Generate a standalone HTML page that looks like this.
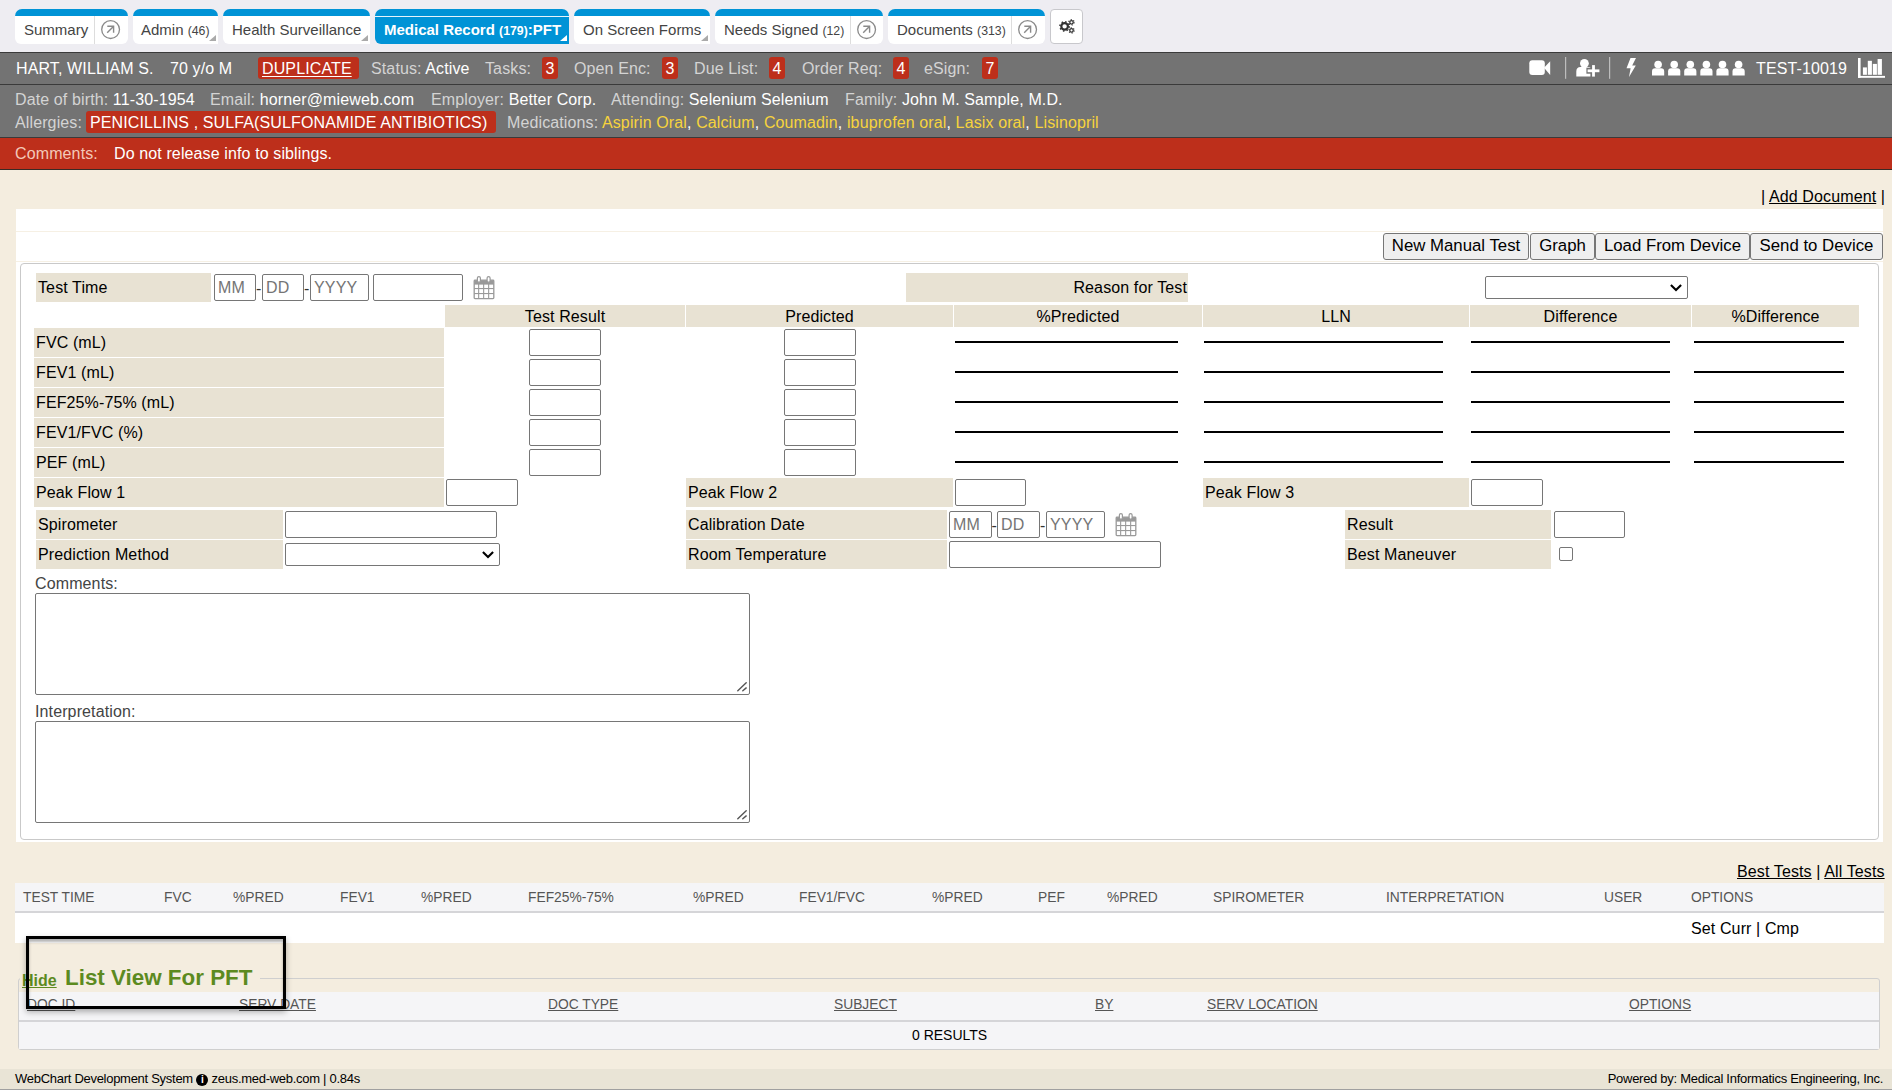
<!DOCTYPE html>
<html><head><meta charset="utf-8">
<style>
*{box-sizing:border-box}
html,body{margin:0;padding:0}
body{width:1892px;height:1090px;overflow:hidden;position:relative;background:#f4eddf;font-family:"Liberation Sans",sans-serif;font-size:16px;color:#000;letter-spacing:0.12px}
.a{position:absolute;white-space:nowrap}
#top{position:absolute;left:0;top:0;width:1892px;height:52px;background:#eeedf2}
.tab{position:absolute;top:9px;height:35px;letter-spacing:0;background:#fff;border-top:7px solid #0093d6;border-radius:7px 7px 6px 6px;font-size:15px;color:#444}
.tab .t{position:absolute;top:5px;white-space:nowrap}
.tab .cnt{font-size:12.3px}
.tab .div{position:absolute;top:0;width:1px;height:28px;background:#ddd}
.tab .ext{position:absolute;top:5px;width:18px;height:18px;border:1.5px solid #777;border-radius:50%}
.tab .tri{position:absolute;right:2px;bottom:3px;width:0;height:0;border-left:7px solid transparent;border-bottom:6px solid #aaa}
.tab.sq{border-bottom-right-radius:0}
.tab.act{background:#0093d6;color:#fff;font-weight:bold}
.tab.act .tri{border-bottom-color:#fff}
#bar1{position:absolute;left:0;top:52px;width:1892px;height:33px;background:#737373;border-top:1px solid #3a3a3a;border-bottom:1px solid #3a3a3a;color:#fff}
#bar2{position:absolute;left:0;top:85px;width:1892px;height:53px;background:#737373;border-bottom:1px solid #3a3a3a;color:#fff}
#bar3{position:absolute;left:0;top:138px;width:1892px;height:32px;background:#bd2f1b;border-bottom:1px solid #3a2a25;color:#fff}
.lbl{color:#d4d4d4}
.med{color:#f7d33c}
.badge{position:absolute;background:#bd2f1b;color:#fff;border-radius:3px;text-align:center}

#wb{position:absolute;left:16px;top:209px;width:1867px;height:633px;background:#fff}
.hl{position:absolute;left:16px;width:1867px;height:1px;background:#f6f0e4}
.btn{position:absolute;top:233px;height:27px;background:#efefef;border:1px solid #767676;border-radius:3px;font-size:16.8px;text-align:center;line-height:24px;letter-spacing:0}
#panel{position:absolute;left:20px;top:263px;width:1859px;height:577px;border:1px solid #c9c9c9;border-radius:4px;background:#fff}
.lb{position:absolute;background:#e8e2d3;height:29px}
.lb span{position:absolute;top:6px;left:2px;white-space:nowrap}
.hd{position:absolute;top:305px;height:22px;background:#e8e2d3;text-align:center;line-height:18px;padding-top:2.5px}
.in{position:absolute;height:27px;border:1px solid #767676;border-radius:2px;background:#fff}
.ph{color:#757575;font-size:16px;padding-left:3px;line-height:26px;letter-spacing:0.2px}
.ul{position:absolute;height:2px;background:#000}
.cal{position:absolute}
.ta{position:absolute;left:35px;width:715px;height:102px;border:1px solid #767676;border-radius:2px;background:#fff}
.tl{position:absolute;left:35px;color:#444;white-space:nowrap;margin-top:1px}
.lh{position:absolute;font-size:13.8px;color:#555;white-space:nowrap;letter-spacing:0}
.dh{position:absolute;font-size:13.8px;color:#555;white-space:nowrap;text-decoration:underline;letter-spacing:0}
</style></head><body>
<div id="top">
  <div class="tab" style="left:15px;width:113px"><span class="t" style="left:9px">Summary</span><span class="div" style="left:79px"></span><svg style="position:absolute;left:86px;top:4px" width="20" height="20" viewBox="0 0 20 20"><circle cx="9.6" cy="9.6" r="8.9" fill="none" stroke="#8a8a8a" stroke-width="1.3"/><path d="M6.2 12.8 L12.4 6.6 M6.3 6.3 H12.6 V12.8" fill="none" stroke="#8a8a8a" stroke-width="1.4"/></svg></div>
  <div class="tab sq" style="left:133px;width:85px"><span class="t" style="left:8px">Admin <span class="cnt">(46)</span></span><span class="tri"></span></div>
  <div class="tab sq" style="left:223px;width:147px"><span class="t" style="left:9px">Health Surveillance</span><span class="tri"></span></div>
  <div class="tab act sq" style="left:375px;width:194px"><span style="position:absolute;left:0;top:0;width:100%;height:1px;background:#e6f4fb"></span><span class="t" style="left:9px">Medical Record <span class="cnt">(179)</span>:PFT</span><span class="tri"></span></div>
  <div class="tab sq" style="left:574px;width:136px"><span class="t" style="left:9px">On Screen Forms</span><span class="tri"></span></div>
  <div class="tab" style="left:715px;width:168px"><span class="t" style="left:9px">Needs Signed <span class="cnt">(12)</span></span><span class="div" style="left:135px"></span><svg style="position:absolute;left:142px;top:4px" width="20" height="20" viewBox="0 0 20 20"><circle cx="9.6" cy="9.6" r="8.9" fill="none" stroke="#8a8a8a" stroke-width="1.3"/><path d="M6.2 12.8 L12.4 6.6 M6.3 6.3 H12.6 V12.8" fill="none" stroke="#8a8a8a" stroke-width="1.4"/></svg></div>
  <div class="tab" style="left:888px;width:157px"><span class="t" style="left:9px">Documents <span class="cnt">(313)</span></span><span class="div" style="left:123px"></span><svg style="position:absolute;left:130px;top:4px" width="20" height="20" viewBox="0 0 20 20"><circle cx="9.6" cy="9.6" r="8.9" fill="none" stroke="#8a8a8a" stroke-width="1.3"/><path d="M6.2 12.8 L12.4 6.6 M6.3 6.3 H12.6 V12.8" fill="none" stroke="#8a8a8a" stroke-width="1.4"/></svg></div>
  <div style="position:absolute;left:1050px;top:9px;width:33px;height:35px;background:#fff;border:1px solid #c8c8cc;border-radius:4px"><svg style="position:absolute;left:5.5px;top:5.5px" width="20" height="20" viewBox="0 0 20 20"><g transform="translate(0.8 0.8) scale(0.92)">
<circle cx="7.4" cy="10.4" r="3.6" fill="none" stroke="#333" stroke-width="2.4"/>
<circle cx="7.4" cy="10.4" r="5.1" fill="none" stroke="#333" stroke-width="1.6" stroke-dasharray="1.6 2.4"/>
<circle cx="14.9" cy="6" r="1.9" fill="none" stroke="#333" stroke-width="1.4"/>
<circle cx="14.9" cy="6" r="2.9" fill="none" stroke="#333" stroke-width="1.2" stroke-dasharray="1.2 1.9"/>
<circle cx="14.9" cy="14.8" r="1.9" fill="none" stroke="#333" stroke-width="1.4"/>
<circle cx="14.9" cy="14.8" r="2.9" fill="none" stroke="#333" stroke-width="1.2" stroke-dasharray="1.2 1.9"/>
</g></svg></div>
</div>
<div id="bar1">
  <span class="a" style="left:16px;top:7px">HART, WILLIAM S.</span>
  <span class="a" style="left:170px;top:7px">70 y/o M</span>
  <span class="badge" style="left:258px;top:4px;width:101px;height:22px;line-height:23px;text-align:left;padding-left:4px;text-decoration:underline;text-decoration-thickness:1px;text-underline-offset:2px">DUPLICATE</span>
  <span class="a lbl" style="left:371px;top:7px">Status: <span style="color:#fff">Active</span></span>
  <span class="a lbl" style="left:485px;top:7px">Tasks:</span>
  <span class="badge" style="left:542px;top:4px;width:16px;height:22px;line-height:23px">3</span>
  <span class="a lbl" style="left:574px;top:7px">Open Enc:</span>
  <span class="badge" style="left:662px;top:4px;width:16px;height:22px;line-height:23px">3</span>
  <span class="a lbl" style="left:694px;top:7px">Due List:</span>
  <span class="badge" style="left:769px;top:4px;width:16px;height:22px;line-height:23px">4</span>
  <span class="a lbl" style="left:802px;top:7px">Order Req:</span>
  <span class="badge" style="left:893px;top:4px;width:16px;height:22px;line-height:23px">4</span>
  <span class="a lbl" style="left:924px;top:7px">eSign:</span>
  <span class="badge" style="left:982px;top:4px;width:16px;height:22px;line-height:23px">7</span>
  <span class="a" style="left:1756px;top:7px">TEST-10019</span>
</div>
<svg style="position:absolute;left:1528px;top:57px" width="360" height="22" viewBox="1528 57 360 22">
<rect x="1529.3" y="60.3" width="15.5" height="14.8" rx="3" fill="#fff"/>
<path d="M1544 67.7 L1550.2 61.2 V75 Z" fill="#fff"/>
<rect x="1565" y="57" width="1.2" height="21.8" fill="#bdbdbd"/>
<circle cx="1584.4" cy="63.3" r="4.4" fill="#fff"/>
<path d="M1576.3 76.6 V71.5 Q1576.3 67 1580.5 67 H1588.5 Q1592 67 1592 70 V76.6 Z" fill="#fff"/>
<rect x="1586.4" y="67.7" width="14.2" height="6" fill="#737373"/>
<rect x="1590.4" y="64" width="6" height="13.6" fill="#737373"/>
<rect x="1587.6" y="69.4" width="11.8" height="2.8" fill="#fff"/>
<rect x="1592.1" y="65.1" width="2.8" height="11.5" fill="#fff"/>
<rect x="1609" y="57" width="1.2" height="21.8" fill="#bdbdbd"/>
<path d="M1630.5 58 L1636 58 L1632.2 65.5 L1635.8 65.5 L1629 77 L1630.6 68.3 L1626.5 68.3 Z" fill="#fff"/>
<circle cx="1658.1" cy="64.5" r="3.8" fill="#fff"/><path d="M1652.0 75.5 V71.5 Q1652.0 68.2 1655.1 68.2 H1661.1 Q1664.2 68.2 1664.2 71.5 V75.5 Z" fill="#fff"/><circle cx="1674.2" cy="64.5" r="3.8" fill="#fff"/><path d="M1668.1 75.5 V71.5 Q1668.1 68.2 1671.2 68.2 H1677.2 Q1680.3 68.2 1680.3 71.5 V75.5 Z" fill="#fff"/><circle cx="1690.3" cy="64.5" r="3.8" fill="#fff"/><path d="M1684.2 75.5 V71.5 Q1684.2 68.2 1687.3 68.2 H1693.3 Q1696.4 68.2 1696.4 71.5 V75.5 Z" fill="#fff"/><circle cx="1706.4" cy="64.5" r="3.8" fill="#fff"/><path d="M1700.3 75.5 V71.5 Q1700.3 68.2 1703.4 68.2 H1709.4 Q1712.5 68.2 1712.5 71.5 V75.5 Z" fill="#fff"/><circle cx="1722.5" cy="64.5" r="3.8" fill="#fff"/><path d="M1716.4 75.5 V71.5 Q1716.4 68.2 1719.5 68.2 H1725.5 Q1728.6 68.2 1728.6 71.5 V75.5 Z" fill="#fff"/><circle cx="1738.6" cy="64.5" r="3.8" fill="#fff"/><path d="M1732.5 75.5 V71.5 Q1732.5 68.2 1735.6 68.2 H1741.6 Q1744.7 68.2 1744.7 71.5 V75.5 Z" fill="#fff"/>
<rect x="1858" y="58" width="2.6" height="19.8" fill="#fff"/>
<rect x="1858" y="75.9" width="27" height="1.9" fill="#fff"/>
<rect x="1862.9" y="67.4" width="4" height="7.4" fill="#fff"/>
<rect x="1867.8" y="60.8" width="4.1" height="14" fill="#fff"/>
<rect x="1872.8" y="63.9" width="4.1" height="10.9" fill="#fff"/>
<rect x="1877.6" y="59" width="4.3" height="15.8" fill="#fff"/>
</svg>
<div id="bar2">
  <span class="a" style="left:15px;top:6px"><span class="lbl">Date of birth:</span> 11-30-1954</span>
  <span class="a" style="left:210px;top:6px"><span class="lbl">Email:</span> horner@mieweb.com</span>
  <span class="a" style="left:431px;top:6px"><span class="lbl">Employer:</span> Better Corp.</span>
  <span class="a" style="left:611px;top:6px"><span class="lbl">Attending:</span> Selenium Selenium</span>
  <span class="a" style="left:845px;top:6px"><span class="lbl">Family:</span> John M. Sample, M.D.</span>
  <span class="a lbl" style="left:15px;top:29px">Allergies:</span>
  <span class="badge" style="left:86px;top:26px;width:410px;height:22px;line-height:23px;text-align:left;padding-left:4px">PENICILLINS , SULFA(SULFONAMIDE ANTIBIOTICS)</span>
  <span class="a" style="left:507px;top:29px;color:#fff"><span class="lbl">Medications:</span> <span class="med">Aspirin Oral</span>, <span class="med">Calcium</span>, <span class="med">Coumadin</span>, <span class="med">ibuprofen oral</span>, <span class="med">Lasix oral</span>, <span class="med">Lisinopril</span></span>
</div>
<div id="bar3">
  <span class="a" style="left:15px;top:7px;color:#f3c9b8">Comments:</span>
  <span class="a" style="left:114px;top:7px">Do not release info to siblings.</span>
</div>
<span class="a" style="left:1761px;top:188px">| <span style="text-decoration:underline">Add Document</span> |</span>
<div id="wb"></div>
<div class="hl" style="top:231px"></div>
<div class="hl" style="top:261px"></div>
<div class="btn" style="left:1383px;width:146px">New Manual Test</div>
<div class="btn" style="left:1530px;width:65px">Graph</div>
<div class="btn" style="left:1595px;width:155px">Load From Device</div>
<div class="btn" style="left:1750px;width:133px">Send to Device</div>
<div id="panel"></div>
<div class="lb" style="left:36px;top:273px;width:175px;height:29px"><span>Test Time</span></div>
<div class="in" style="left:214px;top:274px;width:42px;height:27px"><span class="ph">MM</span></div>
<span class="a" style="left:256px;top:280px;font-size:16px;color:#333">-</span><div class="in" style="left:262px;top:274px;width:42px;height:27px"><span class="ph">DD</span></div>
<span class="a" style="left:304px;top:280px;font-size:16px;color:#333">-</span><div class="in" style="left:310px;top:274px;width:59px;height:27px"><span class="ph">YYYY</span></div>
<div class="in" style="left:373px;top:274px;width:90px;height:27px"></div>
<svg class="cal" style="left:473px;top:276px" width="22" height="24" viewBox="0 0 22 24"><rect x="1.2" y="4.2" width="19.6" height="18.4" rx="0.8" fill="#fff" stroke="#999" stroke-width="1.3"/><rect x="1.2" y="4.2" width="19.6" height="4.4" fill="#999"/><g fill="#999"><rect x="5.1" y="8" width="1.1" height="14.5"/><rect x="10.1" y="8" width="1.1" height="14.5"/><rect x="15.1" y="8" width="1.1" height="14.5"/><rect x="1.2" y="12" width="19.6" height="1.1"/><rect x="1.2" y="17" width="19.6" height="1.1"/></g><rect x="4.4" y="0.6" width="3" height="5.6" rx="1.5" fill="#fff" stroke="#999" stroke-width="1.2"/><rect x="14.1" y="0.6" width="3" height="5.6" rx="1.5" fill="#fff" stroke="#999" stroke-width="1.2"/></svg>
<div class="lb" style="left:906px;top:273px;width:282px;height:29px"><span style="left:auto;right:1px">Reason for Test</span></div>
<div class="in" style="left:1485px;top:276px;width:203px;height:23px"><svg style="position:absolute;right:5px;top:7px" width="12" height="8" viewBox="0 0 12 8"><path d="M0.9 0.9 L6 6 L11.1 0.9" fill="none" stroke="#000" stroke-width="2.1"/></svg></div>
<div class="hd" style="left:445px;width:240px">Test Result</div>
<div class="hd" style="left:686px;width:267px">Predicted</div>
<div class="hd" style="left:954px;width:248px">%Predicted</div>
<div class="hd" style="left:1203px;width:266px">LLN</div>
<div class="hd" style="left:1470px;width:221px">Difference</div>
<div class="hd" style="left:1692px;width:167px">%Difference</div>
<div class="lb" style="left:34px;top:328px;width:410px;height:29px"><span>FVC (mL)</span></div>
<div class="in" style="left:529px;top:329px;width:72px;height:27px"></div>
<div class="in" style="left:784px;top:329px;width:72px;height:27px"></div>
<div class="ul" style="left:955px;top:341px;width:223px"></div>
<div class="ul" style="left:1204px;top:341px;width:239px"></div>
<div class="ul" style="left:1471px;top:341px;width:199px"></div>
<div class="ul" style="left:1694px;top:341px;width:150px"></div>
<div class="lb" style="left:34px;top:358px;width:410px;height:29px"><span>FEV1 (mL)</span></div>
<div class="in" style="left:529px;top:359px;width:72px;height:27px"></div>
<div class="in" style="left:784px;top:359px;width:72px;height:27px"></div>
<div class="ul" style="left:955px;top:371px;width:223px"></div>
<div class="ul" style="left:1204px;top:371px;width:239px"></div>
<div class="ul" style="left:1471px;top:371px;width:199px"></div>
<div class="ul" style="left:1694px;top:371px;width:150px"></div>
<div class="lb" style="left:34px;top:388px;width:410px;height:29px"><span>FEF25%-75% (mL)</span></div>
<div class="in" style="left:529px;top:389px;width:72px;height:27px"></div>
<div class="in" style="left:784px;top:389px;width:72px;height:27px"></div>
<div class="ul" style="left:955px;top:401px;width:223px"></div>
<div class="ul" style="left:1204px;top:401px;width:239px"></div>
<div class="ul" style="left:1471px;top:401px;width:199px"></div>
<div class="ul" style="left:1694px;top:401px;width:150px"></div>
<div class="lb" style="left:34px;top:418px;width:410px;height:29px"><span>FEV1/FVC (%)</span></div>
<div class="in" style="left:529px;top:419px;width:72px;height:27px"></div>
<div class="in" style="left:784px;top:419px;width:72px;height:27px"></div>
<div class="ul" style="left:955px;top:431px;width:223px"></div>
<div class="ul" style="left:1204px;top:431px;width:239px"></div>
<div class="ul" style="left:1471px;top:431px;width:199px"></div>
<div class="ul" style="left:1694px;top:431px;width:150px"></div>
<div class="lb" style="left:34px;top:448px;width:410px;height:29px"><span>PEF (mL)</span></div>
<div class="in" style="left:529px;top:449px;width:72px;height:27px"></div>
<div class="in" style="left:784px;top:449px;width:72px;height:27px"></div>
<div class="ul" style="left:955px;top:461px;width:223px"></div>
<div class="ul" style="left:1204px;top:461px;width:239px"></div>
<div class="ul" style="left:1471px;top:461px;width:199px"></div>
<div class="ul" style="left:1694px;top:461px;width:150px"></div>
<div class="lb" style="left:34px;top:478px;width:410px;height:29px"><span>Peak Flow 1</span></div>
<div class="in" style="left:446px;top:479px;width:72px;height:27px"></div>
<div class="lb" style="left:686px;top:478px;width:267px;height:29px"><span>Peak Flow 2</span></div>
<div class="in" style="left:955px;top:479px;width:71px;height:27px"></div>
<div class="lb" style="left:1203px;top:478px;width:266px;height:29px"><span>Peak Flow 3</span></div>
<div class="in" style="left:1471px;top:479px;width:72px;height:27px"></div>
<div class="lb" style="left:36px;top:510px;width:247px;height:29px"><span>Spirometer</span></div>
<div class="in" style="left:285px;top:511px;width:212px;height:27px"></div>
<div class="lb" style="left:36px;top:540px;width:247px;height:29px"><span>Prediction Method</span></div>
<div class="in" style="left:285px;top:543px;width:215px;height:23px"><svg style="position:absolute;right:5px;top:7px" width="12" height="8" viewBox="0 0 12 8"><path d="M0.9 0.9 L6 6 L11.1 0.9" fill="none" stroke="#000" stroke-width="2.1"/></svg></div>
<div class="lb" style="left:686px;top:510px;width:261px;height:29px"><span>Calibration Date</span></div>
<div class="in" style="left:949px;top:511px;width:43px;height:27px"><span class="ph">MM</span></div>
<span class="a" style="left:991.5px;top:517px;font-size:16px;color:#333">-</span><div class="in" style="left:997px;top:511px;width:43px;height:27px"><span class="ph">DD</span></div>
<span class="a" style="left:1040px;top:517px;font-size:16px;color:#333">-</span><div class="in" style="left:1046px;top:511px;width:59px;height:27px"><span class="ph">YYYY</span></div>
<svg class="cal" style="left:1115px;top:513px" width="22" height="24" viewBox="0 0 22 24"><rect x="1.2" y="4.2" width="19.6" height="18.4" rx="0.8" fill="#fff" stroke="#999" stroke-width="1.3"/><rect x="1.2" y="4.2" width="19.6" height="4.4" fill="#999"/><g fill="#999"><rect x="5.1" y="8" width="1.1" height="14.5"/><rect x="10.1" y="8" width="1.1" height="14.5"/><rect x="15.1" y="8" width="1.1" height="14.5"/><rect x="1.2" y="12" width="19.6" height="1.1"/><rect x="1.2" y="17" width="19.6" height="1.1"/></g><rect x="4.4" y="0.6" width="3" height="5.6" rx="1.5" fill="#fff" stroke="#999" stroke-width="1.2"/><rect x="14.1" y="0.6" width="3" height="5.6" rx="1.5" fill="#fff" stroke="#999" stroke-width="1.2"/></svg>
<div class="lb" style="left:686px;top:540px;width:261px;height:29px"><span>Room Temperature</span></div>
<div class="in" style="left:949px;top:541px;width:212px;height:27px"></div>
<div class="lb" style="left:1345px;top:510px;width:206px;height:29px"><span>Result</span></div>
<div class="in" style="left:1554px;top:511px;width:71px;height:27px"></div>
<div class="lb" style="left:1345px;top:540px;width:206px;height:29px"><span>Best Maneuver</span></div>
<div style="position:absolute;left:1559px;top:547px;width:14px;height:14px;border:1px solid #767676;border-radius:2px;background:#fff"></div>
<span class="tl" style="top:574px">Comments:</span>
<div class="ta" style="top:593px"><svg style="position:absolute;right:2px;bottom:2px" width="12" height="12" viewBox="0 0 12 12"><path d="M2.8 10.8 L11.2 2.8 M7.8 10.8 L11.2 7.9" stroke="#555" stroke-width="1.4" stroke-linecap="round"/></svg></div>
<span class="tl" style="top:702px">Interpretation:</span>
<div class="ta" style="top:721px"><svg style="position:absolute;right:2px;bottom:2px" width="12" height="12" viewBox="0 0 12 12"><path d="M2.8 10.8 L11.2 2.8 M7.8 10.8 L11.2 7.9" stroke="#555" stroke-width="1.4" stroke-linecap="round"/></svg></div>
<span class="a" style="left:1737px;top:863px"><span style="text-decoration:underline">Best Tests</span> | <span style="text-decoration:underline">All Tests</span></span>
<div style="position:absolute;left:15px;top:883px;width:1869px;height:30px;background:#f5f5f7;border-bottom:2px solid #d5d5d8"></div>
<div style="position:absolute;left:15px;top:913px;width:1869px;height:30px;background:#fff"></div>
<span class="lh" style="left:23px;top:890px">TEST TIME</span>
<span class="lh" style="left:164px;top:890px">FVC</span>
<span class="lh" style="left:233px;top:890px">%PRED</span>
<span class="lh" style="left:340px;top:890px">FEV1</span>
<span class="lh" style="left:421px;top:890px">%PRED</span>
<span class="lh" style="left:528px;top:890px">FEF25%-75%</span>
<span class="lh" style="left:693px;top:890px">%PRED</span>
<span class="lh" style="left:799px;top:890px">FEV1/FVC</span>
<span class="lh" style="left:932px;top:890px">%PRED</span>
<span class="lh" style="left:1038px;top:890px">PEF</span>
<span class="lh" style="left:1107px;top:890px">%PRED</span>
<span class="lh" style="left:1213px;top:890px">SPIROMETER</span>
<span class="lh" style="left:1386px;top:890px">INTERPRETATION</span>
<span class="lh" style="left:1604px;top:890px">USER</span>
<span class="lh" style="left:1691px;top:890px">OPTIONS</span>
<span class="a" style="left:1691px;top:920px">Set Curr | Cmp</span>
<div style="position:absolute;left:18px;top:978px;width:1862px;height:72px;border:1px solid #cfcfcf;border-radius:3px"></div>
<div style="position:absolute;left:20px;top:960px;width:240px;height:30px;background:#f4eddf"></div>
<span class="a" style="left:22px;top:972px;font-weight:bold;color:#5c8a1f;text-decoration:underline;font-size:16px;letter-spacing:0">Hide</span>
<span class="a" style="left:65px;top:965px;font-weight:bold;color:#5c8a1f;font-size:22.4px;letter-spacing:0">List View For PFT</span>
<div style="position:absolute;left:19px;top:992px;width:1860px;height:30px;background:#f5f5f7;border-bottom:2px solid #d5d5d8"></div>
<div style="position:absolute;left:19px;top:1022px;width:1860px;height:27px;background:#f5f5f7"></div>
<span class="dh" style="left:27px;top:997px">DOC ID</span>
<span class="dh" style="left:239px;top:997px">SERV DATE</span>
<span class="dh" style="left:548px;top:997px">DOC TYPE</span>
<span class="dh" style="left:834px;top:997px">SUBJECT</span>
<span class="dh" style="left:1095px;top:997px">BY</span>
<span class="dh" style="left:1207px;top:997px">SERV LOCATION</span>
<span class="dh" style="left:1629px;top:997px">OPTIONS</span>
<span class="a" style="left:912px;top:1027px;font-size:14px;letter-spacing:0">0 RESULTS</span>
<div style="position:absolute;left:26px;top:936px;width:260px;height:73px;border:3px solid #000;box-shadow:0 3px 6px rgba(0,0,0,.3), inset 0 3px 3px rgba(0,0,0,.3)"></div>
<div style="position:absolute;left:0;top:1069px;width:1892px;height:21px;background:#e9e4d6;border-bottom:1px solid #a0a0a0"></div>
<span class="a" style="left:15px;top:1071px;font-size:13px;letter-spacing:-0.28px">WebChart Development System <span style="display:inline-block;width:12px;height:12px;border-radius:50%;background:#000;color:#fff;font-size:10px;line-height:12px;text-align:center;font-weight:bold;vertical-align:0px">i</span> zeus.med-web.com | 0.84s</span>
<span class="a" style="right:9px;top:1071px;font-size:13px;letter-spacing:-0.28px">Powered by: Medical Informatics Engineering, Inc.</span>
</body></html>
